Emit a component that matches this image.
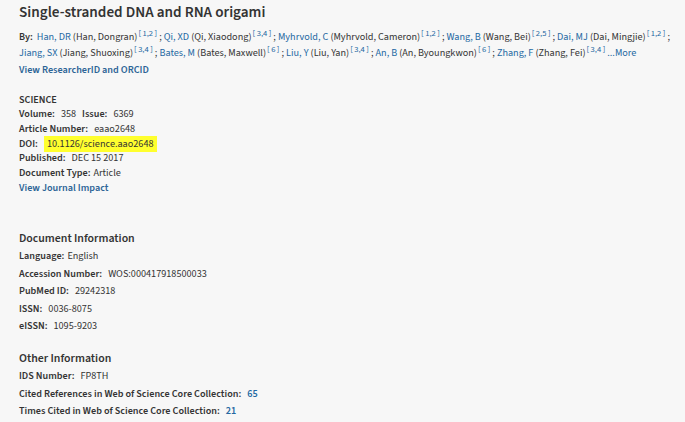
import React from "react";

const authors1 = [
  ["Han, DR", "Han, Dongran", "1,2"],
  ["Qi, XD", "Qi, Xiaodong", "3,4"],
  ["Myhrvold, C", "Myhrvold, Cameron", "1,2"],
  ["Wang, B", "Wang, Bei", "2,5"],
  ["Dai, MJ", "Dai, Mingjie", "1,2"],
];
const authors2 = [
  ["Jiang, SX", "Jiang, Shuoxing", "3,4"],
  ["Bates, M", "Bates, Maxwell", "6"],
  ["Liu, Y", "Liu, Yan", "3,4"],
  ["An, B", "An, Byoungkwon", "6"],
  ["Zhang, F", "Zhang, Fei", "3,4"],
];

function Author({ a, last }) {
  return (
    <>
      <span className="text-[#2468a2]">{a[0]}</span>
      <span> ({a[1]})</span>
      <span className="text-[#2468a2] text-[8.5px] relative -top-[4px] ml-[1px]">[<span className="mx-[1.5px]">{a[2]}</span>]</span>
      <span>{last ? " " : " ; "}</span>
    </>
  );
}

function Row({ label, value, blue, hl, gap = "mr-[6px]" }) {
  return (
    <div>
      <span className={"font-semibold " + gap}>{label}</span>
      <span className={(blue ? "text-[#2468a2] font-semibold " : "") + (hl ? "bg-[#ffff2e] px-[3px] py-[1px] " : "")}>{value}</span>
    </div>
  );
}

export default function App() {
  return (
    <div
      className="w-[685px] h-[422px] bg-[#f7f7f7] text-[#333] overflow-hidden px-[19px] pt-[1px]"
      style={{ fontFamily: "'Source Sans 3', Lato, 'Liberation Sans', sans-serif" }}
    >
      <h1 className="text-[15.2px] font-semibold leading-[22px] text-[#333]">Single-stranded DNA and RNA origami</h1>
      <div className="mt-[6px] text-[10.2px] leading-[16px] whitespace-nowrap">
        <div>
          <span className="font-semibold mr-[4px]">By:</span>
          {authors1.map((a, i) => <Author key={i} a={a} />)}
        </div>
        <div>
          {authors2.map((a, i) => <Author key={i} a={a} last={i === authors2.length - 1} />)}
          <span className="text-[#2468a2]">...More</span>
        </div>
        <div className="text-[#2c6496] font-semibold mt-[1px]">View ResearcherID and ORCID</div>
      </div>

      <div className="mt-[14.7px] text-[10.2px] leading-[14.67px]">
        <div className="font-semibold">SCIENCE</div>
        <div>
          <span className="font-semibold mr-[6px]">Volume:</span>358
          <span className="font-semibold ml-[6px] mr-[6px]">Issue:</span>6369
        </div>
        <Row label="Article Number:" value="eaao2648" />
        <Row label="DOI:" value="10.1126/science.aao2648" hl />
        <Row label="Published:" value="DEC 15 2017" />
        <Row label="Document Type:" value="Article" gap="mr-[3px]" />
        <div className="text-[#2c6496] font-semibold">View Journal Impact</div>
      </div>

      <div className="mt-[35px]">
        <div className="text-[11.8px] font-semibold leading-[18px]">Document Information</div>
        <div className="text-[10.2px] leading-[17.5px]">
          <Row label="Language:" value="English" gap="mr-[3px]" />
          <Row label="Accession Number:" value="WOS:000417918500033" />
          <Row label="PubMed ID:" value="29242318" />
          <Row label="ISSN:" value="0036-8075" />
          <Row label="eISSN:" value="1095-9203" />
        </div>
      </div>

      <div className="mt-[14.5px]">
        <div className="text-[11.8px] font-semibold leading-[18px]">Other Information</div>
        <div className="text-[10.2px] leading-[17.5px]">
          <Row label="IDS Number:" value="FP8TH" />
          <Row label="Cited References in Web of Science Core Collection:" value="65" blue />
          <Row label="Times Cited in Web of Science Core Collection:" value="21" blue />
        </div>
      </div>
    </div>
  );
}
